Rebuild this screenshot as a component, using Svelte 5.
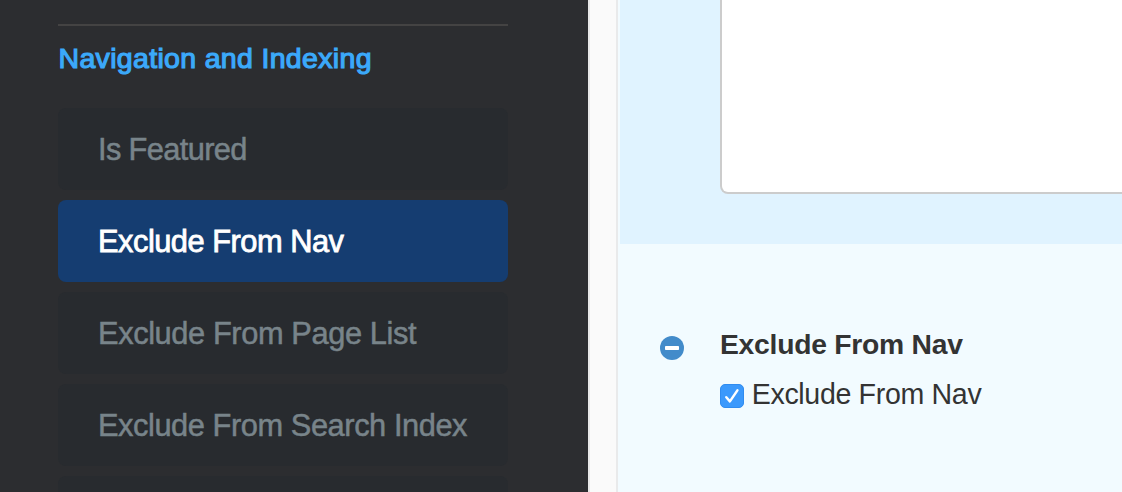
<script>
  const items = ['Is Featured', 'Exclude From Nav', 'Exclude From Page List', 'Exclude From Search Index', ''];
  const widths = [149.5, 246, 318.5, 369.5, 0];
</script>

<div class="page">
  <aside>
    <hr />
    <h2><svg width="340" height="40"><text x="0.5" y="29" textLength="313" lengthAdjust="spacing">Navigation and Indexing</text></svg></h2>
    <nav>
      {#each items as item, i}
        <div class="item" class:active={i === 1}>
          {#if item}
            <svg width="400" height="50"><text x="0" y="35" textLength={widths[i]} lengthAdjust="spacing">{item}</text></svg>
          {/if}
        </div>
      {/each}
    </nav>
  </aside>
  <div class="gutter"></div>
  <main>
    <section class="top"><div class="box"></div></section>
    <section class="attr">
      <svg class="minus" width="24" height="24" viewBox="0 0 24 24"><circle cx="12" cy="12" r="12" fill="#428bca" /><rect x="5" y="10" width="14" height="4" rx="0.8" fill="#fff" /></svg>
      <div class="field">
        <svg class="title" width="300" height="40"><text x="0" y="30" textLength="243" lengthAdjust="spacing">Exclude From Nav</text></svg>
        <div class="check">
          <svg class="tick" width="24" height="24" viewBox="0 0 24 24"><rect x="0.5" y="0.5" width="23" height="23" rx="4.5" fill="#3b99fc" stroke="#308cf0" /><path d="M6.3 13.2 9.9 17.4 17.4 6.4" fill="none" stroke="#fff" stroke-width="2.5" stroke-linecap="round" stroke-linejoin="round" /></svg>
          <svg class="label" width="300" height="40"><text x="-0.3" y="29" textLength="230" lengthAdjust="spacing">Exclude From Nav</text></svg>
        </div>
      </div>
    </section>
  </main>
</div>

<style>
  :global(body) { overflow: hidden; }
  .page { display: flex; width: 1122px; height: 492px; overflow: hidden; font-family: "Liberation Sans", Arial, sans-serif; }
  svg { display: block; flex: none; overflow: visible; }
  aside { box-sizing: border-box; flex: none; width: 588px; padding: 24px 80px 0 58px; background: #2c2d30; }
  hr { height: 2px; margin: 0; border: 0; background: #444343; }
  h2 { margin: 13px 0 29px; font-size: 28.5px; font-weight: 400; fill: #3ba9fa; stroke: #3ba9fa; stroke-width: 1.2px; }
  nav { display: flex; flex-direction: column; gap: 10px; font-size: 30.8px; }
  .item { box-sizing: border-box; height: 82px; padding: 17px 0 0 40px; border-radius: 8px; background: #282b2f; fill: #78848a; stroke: #78848a; stroke-width: 0.5px; }
  .active { background: #153d71; fill: #fff; stroke: #fff; stroke-width: 0.8px; }
  .gutter { box-sizing: border-box; flex: none; width: 30px; background: #fafafa; border-left: 2px solid #e8e8e8; border-right: 2px solid #e9eaeb; }
  main { box-sizing: border-box; width: 504px; padding-left: 2px; background: #f2fbff; }
  .top { box-sizing: border-box; height: 244px; padding-left: 100px; background: #e0f3ff; overflow: hidden; }
  .box { box-sizing: border-box; width: 440px; height: 194px; background: #fff; border: 2px solid #ccc; border-top: 0; border-radius: 0 0 8px 8px; }
  .attr { display: flex; padding: 80px 0 0 40px; }
  .minus { margin-top: 12px; }
  .field { padding-left: 36px; }
  .title { font-size: 28.3px; font-weight: 700; fill: #333; }
  .check { display: flex; align-items: center; gap: 8px; margin-top: 11px; font-size: 28.6px; fill: #333; }
  .tick { margin-top: 2px; }
</style>
